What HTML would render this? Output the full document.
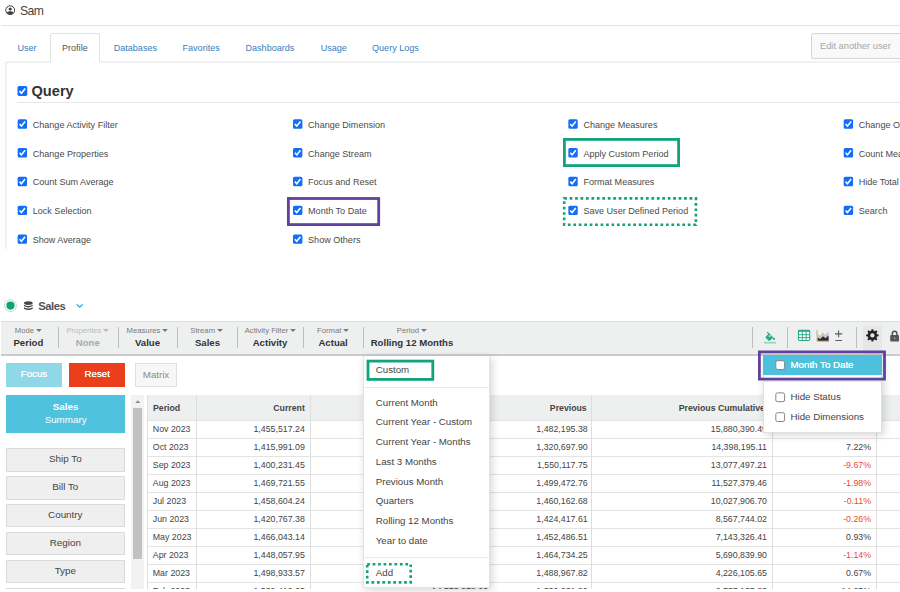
<!DOCTYPE html><html><head><meta charset="utf-8"><title>Sam</title><style>
*{box-sizing:border-box;margin:0;padding:0}
html,body{width:900px;height:592px;overflow:hidden;background:#fff}
body{position:relative;font-family:"Liberation Sans",sans-serif;color:#444;font-size:9.07px}
.abs,.t,.cb,.ln,.btn{position:absolute}
svg{position:absolute;overflow:visible}
.t{white-space:nowrap;line-height:12px;height:12px}
.ln{background:#e4e4e4}
.lbl{color:#4a4a4a}
.tl{font-size:7.7px;color:#7a7a7a;text-align:center}
.tl svg{position:static;display:inline-block;margin-left:1.8px;vertical-align:1.2px}
.tv{font-size:9.6px;font-weight:bold;color:#333;text-align:center}
.sep{position:absolute;width:1px;background:#bdbdbd;top:327px;height:21px}
.btn{text-align:center;white-space:nowrap}
.sb{position:absolute;left:6px;width:118.6px;height:23.4px;background:#efefef;border:1px solid #dadada;text-align:center;line-height:20px;font-size:9.85px;color:#444}
.mi{position:absolute;left:375.8px;font-size:9.7px;color:#444;white-space:nowrap;line-height:12px;height:12px}
.th{position:absolute;top:395.6px;height:25px;line-height:25px;font-weight:bold;font-size:8.73px;color:#444;white-space:nowrap;text-align:right}
.td{position:absolute;height:18px;line-height:18px;font-size:8.8px;color:#444;white-space:nowrap;text-align:right}
.neg{color:#ea4b33}
.vl{position:absolute;width:1px;background:#dedede}
</style></head><body>
<svg style="left:4.9px;top:5.1px" width="11" height="11" viewBox="0 0 11 11"><circle cx="5.2" cy="5.2" r="4.45" fill="none" stroke="#3a3a3a" stroke-width="1"/><circle cx="5.2" cy="4" r="1.55" fill="#3a3a3a"/><path d="M1.7 7.6 Q5.2 4.9 8.7 7.6 A4.4 4.4 0 0 1 1.7 7.6Z" fill="#3a3a3a"/></svg>
<div class="t" style="left:20px;top:4.5px;font-size:12.2px;color:#444;letter-spacing:-0.6px">Sam</div>
<div class="ln" style="left:1px;top:25px;width:900px;height:1px"></div>
<svg style="left:0;top:0" width="900" height="270"><path d="M5.9 249V62H50.5M99.5 62H900" fill="none" stroke="#e4e4e4" stroke-width="1"/></svg>
<div class="abs" style="left:50px;top:33px;width:50px;height:29px;border:1px solid #e2e2e2;border-bottom:0;border-radius:2.5px 2.5px 0 0;background:#fff"></div>
<div class="t" style="left:17.5px;top:42px;color:#3580bd">User</div>
<div class="t" style="left:62px;top:42px;color:#555">Profile</div>
<div class="t" style="left:113.7px;top:42px;color:#3580bd">Databases</div>
<div class="t" style="left:182.5px;top:42px;color:#3580bd">Favorites</div>
<div class="t" style="left:245.5px;top:42px;color:#3580bd">Dashboards</div>
<div class="t" style="left:320.7px;top:42px;color:#3580bd">Usage</div>
<div class="t" style="left:372px;top:42px;color:#3580bd">Query Logs</div>
<div class="abs" style="left:811px;top:33px;width:100px;height:25.5px;border:1px solid #d4d4d4;border-radius:2.5px;background:#f9f9f9"></div>
<div class="t" style="left:820px;top:39.6px;font-size:9.3px;color:#a5a5a5">Edit another user</div>
<svg style="left:0;top:0" width="900" height="592"><g transform="translate(17.5 86.1) scale(0.980)"><rect width="10" height="10" rx="1.6" fill="#126efa"/><path d="M2 5.1 L4 7.3 L7.9 2.4" fill="none" stroke="#fff" stroke-width="1.65"/></g></svg>
<div class="t" style="left:31.5px;top:82.5px;font-size:14.6px;font-weight:bold;color:#333;line-height:17px;height:17px">Query</div>
<div class="ln" style="left:17px;top:102px;width:890px;height:1px;background:#e8e8e8"></div>
<svg style="left:0;top:0" width="900" height="592"><g transform="translate(17.65 119.25) scale(0.940)"><rect width="10" height="10" rx="1.6" fill="#126efa"/><path d="M2 5.1 L4 7.3 L7.9 2.4" fill="none" stroke="#fff" stroke-width="1.65"/></g></svg>
<div class="t lbl" style="left:32.7px;top:119px">Change Activity Filter</div>
<svg style="left:0;top:0" width="900" height="592"><g transform="translate(17.65 148.05) scale(0.940)"><rect width="10" height="10" rx="1.6" fill="#126efa"/><path d="M2 5.1 L4 7.3 L7.9 2.4" fill="none" stroke="#fff" stroke-width="1.65"/></g></svg>
<div class="t lbl" style="left:32.7px;top:148px">Change Properties</div>
<svg style="left:0;top:0" width="900" height="592"><g transform="translate(17.65 176.85) scale(0.940)"><rect width="10" height="10" rx="1.6" fill="#126efa"/><path d="M2 5.1 L4 7.3 L7.9 2.4" fill="none" stroke="#fff" stroke-width="1.65"/></g></svg>
<div class="t lbl" style="left:32.7px;top:176px">Count Sum Average</div>
<svg style="left:0;top:0" width="900" height="592"><g transform="translate(17.65 205.65) scale(0.940)"><rect width="10" height="10" rx="1.6" fill="#126efa"/><path d="M2 5.1 L4 7.3 L7.9 2.4" fill="none" stroke="#fff" stroke-width="1.65"/></g></svg>
<div class="t lbl" style="left:32.7px;top:205px">Lock Selection</div>
<svg style="left:0;top:0" width="900" height="592"><g transform="translate(17.65 234.45) scale(0.940)"><rect width="10" height="10" rx="1.6" fill="#126efa"/><path d="M2 5.1 L4 7.3 L7.9 2.4" fill="none" stroke="#fff" stroke-width="1.65"/></g></svg>
<div class="t lbl" style="left:32.7px;top:234px">Show Average</div>
<svg style="left:0;top:0" width="900" height="592"><g transform="translate(293.0 119.25) scale(0.940)"><rect width="10" height="10" rx="1.6" fill="#126efa"/><path d="M2 5.1 L4 7.3 L7.9 2.4" fill="none" stroke="#fff" stroke-width="1.65"/></g></svg>
<div class="t lbl" style="left:308.05px;top:119px">Change Dimension</div>
<svg style="left:0;top:0" width="900" height="592"><g transform="translate(293.0 148.05) scale(0.940)"><rect width="10" height="10" rx="1.6" fill="#126efa"/><path d="M2 5.1 L4 7.3 L7.9 2.4" fill="none" stroke="#fff" stroke-width="1.65"/></g></svg>
<div class="t lbl" style="left:308.05px;top:148px">Change Stream</div>
<svg style="left:0;top:0" width="900" height="592"><g transform="translate(293.0 176.85) scale(0.940)"><rect width="10" height="10" rx="1.6" fill="#126efa"/><path d="M2 5.1 L4 7.3 L7.9 2.4" fill="none" stroke="#fff" stroke-width="1.65"/></g></svg>
<div class="t lbl" style="left:308.05px;top:176px">Focus and Reset</div>
<svg style="left:0;top:0" width="900" height="592"><g transform="translate(293.0 205.65) scale(0.940)"><rect width="10" height="10" rx="1.6" fill="#126efa"/><path d="M2 5.1 L4 7.3 L7.9 2.4" fill="none" stroke="#fff" stroke-width="1.65"/></g></svg>
<div class="t lbl" style="left:308.05px;top:205px">Month To Date</div>
<svg style="left:0;top:0" width="900" height="592"><g transform="translate(293.0 234.45) scale(0.940)"><rect width="10" height="10" rx="1.6" fill="#126efa"/><path d="M2 5.1 L4 7.3 L7.9 2.4" fill="none" stroke="#fff" stroke-width="1.65"/></g></svg>
<div class="t lbl" style="left:308.05px;top:234px">Show Others</div>
<svg style="left:0;top:0" width="900" height="592"><g transform="translate(568.35 119.25) scale(0.940)"><rect width="10" height="10" rx="1.6" fill="#126efa"/><path d="M2 5.1 L4 7.3 L7.9 2.4" fill="none" stroke="#fff" stroke-width="1.65"/></g></svg>
<div class="t lbl" style="left:583.4px;top:119px">Change Measures</div>
<svg style="left:0;top:0" width="900" height="592"><g transform="translate(568.35 148.05) scale(0.940)"><rect width="10" height="10" rx="1.6" fill="#126efa"/><path d="M2 5.1 L4 7.3 L7.9 2.4" fill="none" stroke="#fff" stroke-width="1.65"/></g></svg>
<div class="t lbl" style="left:583.4px;top:148px">Apply Custom Period</div>
<svg style="left:0;top:0" width="900" height="592"><g transform="translate(568.35 176.85) scale(0.940)"><rect width="10" height="10" rx="1.6" fill="#126efa"/><path d="M2 5.1 L4 7.3 L7.9 2.4" fill="none" stroke="#fff" stroke-width="1.65"/></g></svg>
<div class="t lbl" style="left:583.4px;top:176px">Format Measures</div>
<svg style="left:0;top:0" width="900" height="592"><g transform="translate(568.35 205.65) scale(0.940)"><rect width="10" height="10" rx="1.6" fill="#126efa"/><path d="M2 5.1 L4 7.3 L7.9 2.4" fill="none" stroke="#fff" stroke-width="1.65"/></g></svg>
<div class="t lbl" style="left:583.4px;top:205px">Save User Defined Period</div>
<svg style="left:0;top:0" width="900" height="592"><g transform="translate(843.7 119.25) scale(0.940)"><rect width="10" height="10" rx="1.6" fill="#126efa"/><path d="M2 5.1 L4 7.3 L7.9 2.4" fill="none" stroke="#fff" stroke-width="1.65"/></g></svg>
<div class="t lbl" style="left:858.75px;top:119px">Change Others</div>
<svg style="left:0;top:0" width="900" height="592"><g transform="translate(843.7 148.05) scale(0.940)"><rect width="10" height="10" rx="1.6" fill="#126efa"/><path d="M2 5.1 L4 7.3 L7.9 2.4" fill="none" stroke="#fff" stroke-width="1.65"/></g></svg>
<div class="t lbl" style="left:858.75px;top:148px">Count Measures</div>
<svg style="left:0;top:0" width="900" height="592"><g transform="translate(843.7 176.85) scale(0.940)"><rect width="10" height="10" rx="1.6" fill="#126efa"/><path d="M2 5.1 L4 7.3 L7.9 2.4" fill="none" stroke="#fff" stroke-width="1.65"/></g></svg>
<div class="t lbl" style="left:858.75px;top:176px">Hide Total</div>
<svg style="left:0;top:0" width="900" height="592"><g transform="translate(843.7 205.65) scale(0.940)"><rect width="10" height="10" rx="1.6" fill="#126efa"/><path d="M2 5.1 L4 7.3 L7.9 2.4" fill="none" stroke="#fff" stroke-width="1.65"/></g></svg>
<div class="t lbl" style="left:858.75px;top:205px">Search</div>
<svg style="left:0;top:0" width="900" height="592"><rect x="288.40" y="198.50" width="90.30" height="26.10" fill="none" stroke="#5f429d" stroke-width="2.8"/><rect x="564.40" y="139.40" width="114.20" height="26.20" fill="none" stroke="#10a37c" stroke-width="2.8"/><rect x="564.20" y="198.40" width="131.70" height="26.40" fill="none" stroke="#10a37c" stroke-width="2.6" stroke-dasharray="2.7 2.75"/><circle cx="10.5" cy="305.6" r="5.85" fill="#fff" stroke="#9bdcc0" stroke-width="0.9"/><circle cx="10.5" cy="305.6" r="4.1" fill="#0fa46c"/><g transform="translate(23.6 301.1) scale(0.95 1)"><ellipse cx="5" cy="2" rx="4.6" ry="1.9" fill="#444"/><path d="M0.4 3.6 Q5 6.2 9.6 3.6 V5 Q5 7.6 0.4 5Z M0.4 6.2 Q5 8.8 9.6 6.2 V7.6 Q5 10.2 0.4 7.6Z" fill="#444"/></g><path d="M76.7 304.4 L79.75 307.2 L82.8 304.4" fill="none" stroke="#1fa3d4" stroke-width="1.25"/></svg>
<div class="t" style="left:38.3px;top:300px;font-size:11.3px;font-weight:bold;color:#555;letter-spacing:-0.5px">Sales</div>
<div class="abs" style="left:1px;top:321px;width:900px;height:35px;background:#eeefef;border-top:1px solid #dcdcdc;border-bottom:2px solid #cbcbcb"></div>
<div class="abs" style="left:863px;top:326px;width:18.6px;height:28px;background:#e6e7e7"></div>
<div class="t tl" style="left:-11.7px;width:80px;top:325px;color:#7a7a7a">Mode<svg width="5.9" height="3" viewBox="0 0 5.9 3"><path d="M0 0H5.9L2.95 3Z" fill="#7a7a7a"/></svg></div>
<div class="t tv" style="left:-31.6px;width:120px;top:337px;color:#333">Period</div>
<div class="t tl" style="left:47.8px;width:80px;top:325px;color:#bcbcbc">Properties<svg width="5.9" height="3" viewBox="0 0 5.9 3"><path d="M0 0H5.9L2.95 3Z" fill="#bcbcbc"/></svg></div>
<div class="t tv" style="left:27.799999999999997px;width:120px;top:337px;color:#aaa">None</div>
<div class="t tl" style="left:107.30000000000001px;width:80px;top:325px;color:#7a7a7a">Measures<svg width="5.9" height="3" viewBox="0 0 5.9 3"><path d="M0 0H5.9L2.95 3Z" fill="#7a7a7a"/></svg></div>
<div class="t tv" style="left:87.5px;width:120px;top:337px;color:#333">Value</div>
<div class="t tl" style="left:166.5px;width:80px;top:325px;color:#7a7a7a">Stream<svg width="5.9" height="3" viewBox="0 0 5.9 3"><path d="M0 0H5.9L2.95 3Z" fill="#7a7a7a"/></svg></div>
<div class="t tv" style="left:147.5px;width:120px;top:337px;color:#333">Sales</div>
<div class="t tl" style="left:230.3px;width:80px;top:325px;color:#7a7a7a">Activity Filter<svg width="5.9" height="3" viewBox="0 0 5.9 3"><path d="M0 0H5.9L2.95 3Z" fill="#7a7a7a"/></svg></div>
<div class="t tv" style="left:210px;width:120px;top:337px;color:#333">Activity</div>
<div class="t tl" style="left:293px;width:80px;top:325px;color:#7a7a7a">Format<svg width="5.9" height="3" viewBox="0 0 5.9 3"><path d="M0 0H5.9L2.95 3Z" fill="#7a7a7a"/></svg></div>
<div class="t tv" style="left:273.1px;width:120px;top:337px;color:#333">Actual</div>
<div class="t tl" style="left:371.8px;width:80px;top:325px;color:#7a7a7a">Period<svg width="5.9" height="3" viewBox="0 0 5.9 3"><path d="M0 0H5.9L2.95 3Z" fill="#7a7a7a"/></svg></div>
<div class="t tv" style="left:352px;width:120px;top:337px;color:#333">Rolling 12 Months</div>
<div class="sep" style="left:58px"></div>
<div class="sep" style="left:118px"></div>
<div class="sep" style="left:177px"></div>
<div class="sep" style="left:237px"></div>
<div class="sep" style="left:303px"></div>
<div class="sep" style="left:363px"></div>
<div class="sep" style="left:752px"></div>
<div class="sep" style="left:787px"></div>
<div class="sep" style="left:856px"></div>
<svg style="left:0;top:0" width="900" height="592"><path d="M769 333.3 L773.3 337.5 L769.7 340.7 Q769.2 341.1 768.7 340.7 L765.7 337.8 Q765.3 337.3 765.7 336.8 Z" fill="#1fad8c"/><path d="M767.1 332.1 L769.7 334.7" stroke="#1fad8c" stroke-width="1.1" fill="none"/><path d="M767.9 336.5 L771.5 336.5 L769.7 335.1 Z" fill="#d9f1ea"/><circle cx="773.9" cy="338.9" r="1.15" fill="#1fad8c"/><rect x="764" y="341.8" width="12" height="1.8" fill="#8fd9c3"/><rect x="798.5" y="330.4" width="11.2" height="10.1" rx="0.9" fill="#fff" stroke="#28a98a" stroke-width="1.1"/><rect x="798.5" y="330.1" width="11.2" height="1.7" fill="#28a98a"/><path d="M798.5 334.7 H809.7 M798.5 337.6 H809.7 M802.3 331 V340.5 M806.1 331 V340.5" stroke="#28a98a" stroke-width="0.95" fill="none"/><path d="M817.6 340.8 V333.6 L820 336.3 L822.8 332.2 L825.3 335.3 L828.6 331.2 V340.8Z" fill="#c6c6c6"/><path d="M817.6 341 V337.4 L820.2 339 L823 336.2 L825.5 338.2 L828.6 335.6 V341Z" fill="#2e2e2e"/><path d="M817 330 V341.2 H829" stroke="#c9a672" stroke-width="1" fill="none"/><path d="M835 333.9H842.2M838.6 330.5V337.3M835.4 340.5H842" stroke="#5a5a5a" stroke-width="1.1" fill="none"/></svg>
<svg style="left:866.3px;top:329.4px" width="12.8" height="12.8" viewBox="0 0 12.4 12.4"><path fill-rule="evenodd" fill="#222" d="M10.67 5.13 L12.23 5.29 L12.23 7.11 L10.67 7.27 L10.12 8.60 L11.11 9.82 L9.82 11.11 L8.60 10.12 L7.27 10.67 L7.11 12.23 L5.29 12.23 L5.13 10.67 L3.80 10.12 L2.58 11.11 L1.29 9.82 L2.28 8.60 L1.73 7.27 L0.17 7.11 L0.17 5.29 L1.73 5.13 L2.28 3.80 L1.29 2.58 L2.58 1.29 L3.80 2.28 L5.13 1.73 L5.29 0.17 L7.11 0.17 L7.27 1.73 L8.60 2.28 L9.82 1.29 L11.11 2.58 L10.12 3.80Z M8.30 6.20 A2.1 2.1 0 1 0 4.10 6.20 A2.1 2.1 0 1 0 8.30 6.20Z"/></svg>
<svg style="left:890px;top:329.6px" width="9.2" height="11.6" viewBox="0 0 9.2 11.6"><path d="M2.3 5.4 V3.6 A2.3 2.3 0 0 1 6.9 3.6 V5.4" fill="none" stroke="#555" stroke-width="1.5"/><rect x="0.2" y="5" width="8.8" height="6.4" rx="0.9" fill="#555"/><rect x="4" y="7" width="1.2" height="2.4" fill="#999"/></svg>
<div class="btn" style="left:6px;top:363px;width:56px;height:24px;line-height:22px;background:#8fd8e8;color:#fff;font-size:9.7px;text-shadow:0 0 0.4px #fff">Focus</div>
<div class="btn" style="left:69.2px;top:363px;width:56px;height:24px;line-height:22px;background:#eb3f1c;color:#fff;font-size:9.7px;text-shadow:0 0 0.4px #fff">Reset</div>
<div class="btn" style="left:135px;top:363px;width:42px;height:24px;line-height:21px;background:#f7f7f7;border:1px solid #e0e0e0;color:#8a8a8a;font-size:9.7px">Matrix</div>
<div class="btn" style="left:6px;top:395px;width:119.2px;height:37.5px;background:#4fc3de"></div>
<div class="t" style="left:6px;width:119.2px;top:401px;text-align:center;color:#fff;font-size:9.8px;font-weight:bold">Sales</div>
<div class="t" style="left:6px;width:119.2px;top:414px;text-align:center;color:#fff;font-size:9.8px">Summary</div>
<div class="sb" style="top:448.3px">Ship To</div>
<div class="sb" style="top:476.2px">Bill To</div>
<div class="sb" style="top:504.1px">Country</div>
<div class="sb" style="top:532.0px">Region</div>
<div class="sb" style="top:559.9px">Type</div>
<div class="sb" style="top:587.8px">Salesrep</div>
<div class="abs" style="left:131.2px;top:395px;width:12.4px;height:200px;background:#f2f2f2"></div>
<div class="abs" style="left:133px;top:408px;width:9px;height:151px;background:#c1c1c1"></div>
<svg style="left:134.6px;top:400px" width="5.6" height="3.4" viewBox="0 0 6 4"><path d="M0 3.6 L3 0.4 L6 3.6Z" fill="#8a8a8a"/></svg>
<div class="abs" style="left:147px;top:395px;width:760px;height:25px;background:#eeefef"></div>
<div class="ln" style="left:147px;top:419.6px;width:760px;height:1px;background:#e4e4e4"></div>
<div class="ln" style="left:147px;top:437.6px;width:760px;height:1px;background:#e4e4e4"></div>
<div class="ln" style="left:147px;top:455.6px;width:760px;height:1px;background:#e4e4e4"></div>
<div class="ln" style="left:147px;top:473.6px;width:760px;height:1px;background:#e4e4e4"></div>
<div class="ln" style="left:147px;top:491.6px;width:760px;height:1px;background:#e4e4e4"></div>
<div class="ln" style="left:147px;top:509.6px;width:760px;height:1px;background:#e4e4e4"></div>
<div class="ln" style="left:147px;top:527.6px;width:760px;height:1px;background:#e4e4e4"></div>
<div class="ln" style="left:147px;top:545.6px;width:760px;height:1px;background:#e4e4e4"></div>
<div class="ln" style="left:147px;top:563.6px;width:760px;height:1px;background:#e4e4e4"></div>
<div class="ln" style="left:147px;top:581.6px;width:760px;height:1px;background:#e4e4e4"></div>
<div class="vl" style="left:147px;top:395px;height:200px"></div>
<div class="vl" style="left:196px;top:395px;height:200px"></div>
<div class="vl" style="left:310px;top:395px;height:200px"></div>
<div class="vl" style="left:591px;top:395px;height:200px"></div>
<div class="vl" style="left:772px;top:395px;height:200px"></div>
<div class="vl" style="left:876px;top:395px;height:200px"></div>
<div class="th" style="left:153px;text-align:left">Period</div>
<div class="th" style="left:205px;width:99.8px">Current</div>
<div class="th" style="left:316px;width:172px">Current Cumulative</div>
<div class="th" style="left:487px;width:99.7px">Previous</div>
<div class="th" style="left:678.7px;text-align:left">Previous Cumulative</div>
<div class="th" style="left:778px;width:93px">Variance %</div>
<div class="td" style="left:152.8px;top:419.8px;text-align:left">Nov 2023</div>
<div class="td" style="left:205px;width:99.8px;top:419.8px">1,455,517.24</div>
<div class="td" style="left:316px;width:172px;top:419.8px">1,455,517.24</div>
<div class="td" style="left:487px;width:100.7px;top:419.8px">1,482,195.38</div>
<div class="td" style="left:598px;width:169px;top:419.8px">15,880,390.49</div>
<div class="td neg" style="left:778px;width:93px;top:419.8px">-1.80%</div>
<div class="td" style="left:152.8px;top:437.8px;text-align:left">Oct 2023</div>
<div class="td" style="left:205px;width:99.8px;top:437.8px">1,415,991.09</div>
<div class="td" style="left:316px;width:172px;top:437.8px">2,871,508.33</div>
<div class="td" style="left:487px;width:100.7px;top:437.8px">1,320,697.90</div>
<div class="td" style="left:598px;width:169px;top:437.8px">14,398,195.11</div>
<div class="td" style="left:778px;width:93px;top:437.8px">7.22%</div>
<div class="td" style="left:152.8px;top:455.8px;text-align:left">Sep 2023</div>
<div class="td" style="left:205px;width:99.8px;top:455.8px">1,400,231.45</div>
<div class="td" style="left:316px;width:172px;top:455.8px">4,271,739.78</div>
<div class="td" style="left:487px;width:100.7px;top:455.8px">1,550,117.75</div>
<div class="td" style="left:598px;width:169px;top:455.8px">13,077,497.21</div>
<div class="td neg" style="left:778px;width:93px;top:455.8px">-9.67%</div>
<div class="td" style="left:152.8px;top:473.8px;text-align:left">Aug 2023</div>
<div class="td" style="left:205px;width:99.8px;top:473.8px">1,469,721.55</div>
<div class="td" style="left:316px;width:172px;top:473.8px">5,741,461.33</div>
<div class="td" style="left:487px;width:100.7px;top:473.8px">1,499,472.76</div>
<div class="td" style="left:598px;width:169px;top:473.8px">11,527,379.46</div>
<div class="td neg" style="left:778px;width:93px;top:473.8px">-1.98%</div>
<div class="td" style="left:152.8px;top:491.8px;text-align:left">Jul 2023</div>
<div class="td" style="left:205px;width:99.8px;top:491.8px">1,458,604.24</div>
<div class="td" style="left:316px;width:172px;top:491.8px">7,200,065.57</div>
<div class="td" style="left:487px;width:100.7px;top:491.8px">1,460,162.68</div>
<div class="td" style="left:598px;width:169px;top:491.8px">10,027,906.70</div>
<div class="td neg" style="left:778px;width:93px;top:491.8px">-0.11%</div>
<div class="td" style="left:152.8px;top:509.8px;text-align:left">Jun 2023</div>
<div class="td" style="left:205px;width:99.8px;top:509.8px">1,420,767.38</div>
<div class="td" style="left:316px;width:172px;top:509.8px">8,620,832.95</div>
<div class="td" style="left:487px;width:100.7px;top:509.8px">1,424,417.61</div>
<div class="td" style="left:598px;width:169px;top:509.8px">8,567,744.02</div>
<div class="td neg" style="left:778px;width:93px;top:509.8px">-0.26%</div>
<div class="td" style="left:152.8px;top:527.8px;text-align:left">May 2023</div>
<div class="td" style="left:205px;width:99.8px;top:527.8px">1,466,043.14</div>
<div class="td" style="left:316px;width:172px;top:527.8px">10,086,876.09</div>
<div class="td" style="left:487px;width:100.7px;top:527.8px">1,452,486.51</div>
<div class="td" style="left:598px;width:169px;top:527.8px">7,143,326.41</div>
<div class="td" style="left:778px;width:93px;top:527.8px">0.93%</div>
<div class="td" style="left:152.8px;top:545.8px;text-align:left">Apr 2023</div>
<div class="td" style="left:205px;width:99.8px;top:545.8px">1,448,057.95</div>
<div class="td" style="left:316px;width:172px;top:545.8px">11,534,934.04</div>
<div class="td" style="left:487px;width:100.7px;top:545.8px">1,464,734.25</div>
<div class="td" style="left:598px;width:169px;top:545.8px">5,690,839.90</div>
<div class="td neg" style="left:778px;width:93px;top:545.8px">-1.14%</div>
<div class="td" style="left:152.8px;top:563.8px;text-align:left">Mar 2023</div>
<div class="td" style="left:205px;width:99.8px;top:563.8px">1,498,933.57</div>
<div class="td" style="left:316px;width:172px;top:563.8px">13,033,867.61</div>
<div class="td" style="left:487px;width:100.7px;top:563.8px">1,488,967.82</div>
<div class="td" style="left:598px;width:169px;top:563.8px">4,226,105.65</div>
<div class="td" style="left:778px;width:93px;top:563.8px">0.67%</div>
<div class="td" style="left:152.8px;top:581.8px;text-align:left">Feb 2023</div>
<div class="td" style="left:205px;width:99.8px;top:581.8px">1,539,410.65</div>
<div class="td" style="left:316px;width:172px;top:581.8px">14,573,278.26</div>
<div class="td" style="left:487px;width:100.7px;top:581.8px">1,339,631.90</div>
<div class="td" style="left:598px;width:169px;top:581.8px">2,737,137.83</div>
<div class="td" style="left:778px;width:93px;top:581.8px">14.25%</div>
<div class="abs" style="left:0;top:589px;width:900px;height:4px;background:#fff"></div>
<div class="abs" style="left:363.4px;top:355.7px;width:126.4px;height:232.3px;background:#fff;border:1px solid #e3e3e3;border-top:0;box-shadow:2px 2px 8px rgba(0,0,0,0.17)"></div>
<div class="ln" style="left:364px;top:386.8px;width:125px;height:1px;background:#eaeaea"></div>
<div class="ln" style="left:364px;top:556.8px;width:125px;height:1px;background:#eaeaea"></div>
<div class="mi" style="top:364px">Custom</div>
<div class="mi" style="top:397px">Current Month</div>
<div class="mi" style="top:416px">Current Year - Custom</div>
<div class="mi" style="top:436px">Current Year - Months</div>
<div class="mi" style="top:456px">Last 3 Months</div>
<div class="mi" style="top:476px">Previous Month</div>
<div class="mi" style="top:495px">Quarters</div>
<div class="mi" style="top:515px">Rolling 12 Months</div>
<div class="mi" style="top:535px">Year to date</div>
<div class="mi" style="top:567px">Add</div>
<svg style="left:0;top:0" width="900" height="592"><rect x="368.00" y="361.10" width="64.80" height="18.30" fill="none" stroke="#10a37c" stroke-width="2.8"/><rect x="367.20" y="564.30" width="43.50" height="18.10" fill="none" stroke="#10a37c" stroke-width="2.6" stroke-dasharray="2.7 2.75"/></svg>
<div class="abs" style="left:763px;top:355.7px;width:118.6px;height:77px;background:#fff;border:1px solid #e0e0e0;border-top:0;box-shadow:2px 2px 8px rgba(0,0,0,0.17)"></div>
<div class="abs" style="left:763px;top:355.2px;width:118.5px;height:20.3px;background:#4cc0dc"></div>
<div class="ln" style="left:764px;top:381.3px;width:117px;height:1px;background:#e5e5e5"></div>
<svg style="left:0;top:0" width="900" height="592"><rect x="775.8" y="360.7" width="8.8" height="8.8" rx="1.7" fill="#fff" stroke="#868686" stroke-width="1"/><rect x="775.8" y="392.9" width="8.8" height="8.8" rx="1.7" fill="#fff" stroke="#868686" stroke-width="1"/><rect x="775.8" y="412.7" width="8.8" height="8.8" rx="1.7" fill="#fff" stroke="#868686" stroke-width="1"/></svg>
<div class="t" style="left:790.5px;top:359.3px;font-size:9.72px;color:#fff;text-shadow:0 0 0.4px #fff">Month To Date</div>
<div class="t" style="left:790.5px;top:390.8px;font-size:9.72px;color:#444">Hide Status</div>
<div class="t" style="left:790.5px;top:410.6px;font-size:9.72px;color:#444">Hide Dimensions</div>
<svg style="left:0;top:0" width="900" height="592"><rect x="759.40" y="351.90" width="125.10" height="27.20" fill="none" stroke="#5f429d" stroke-width="2.8"/></svg>
</body></html>
